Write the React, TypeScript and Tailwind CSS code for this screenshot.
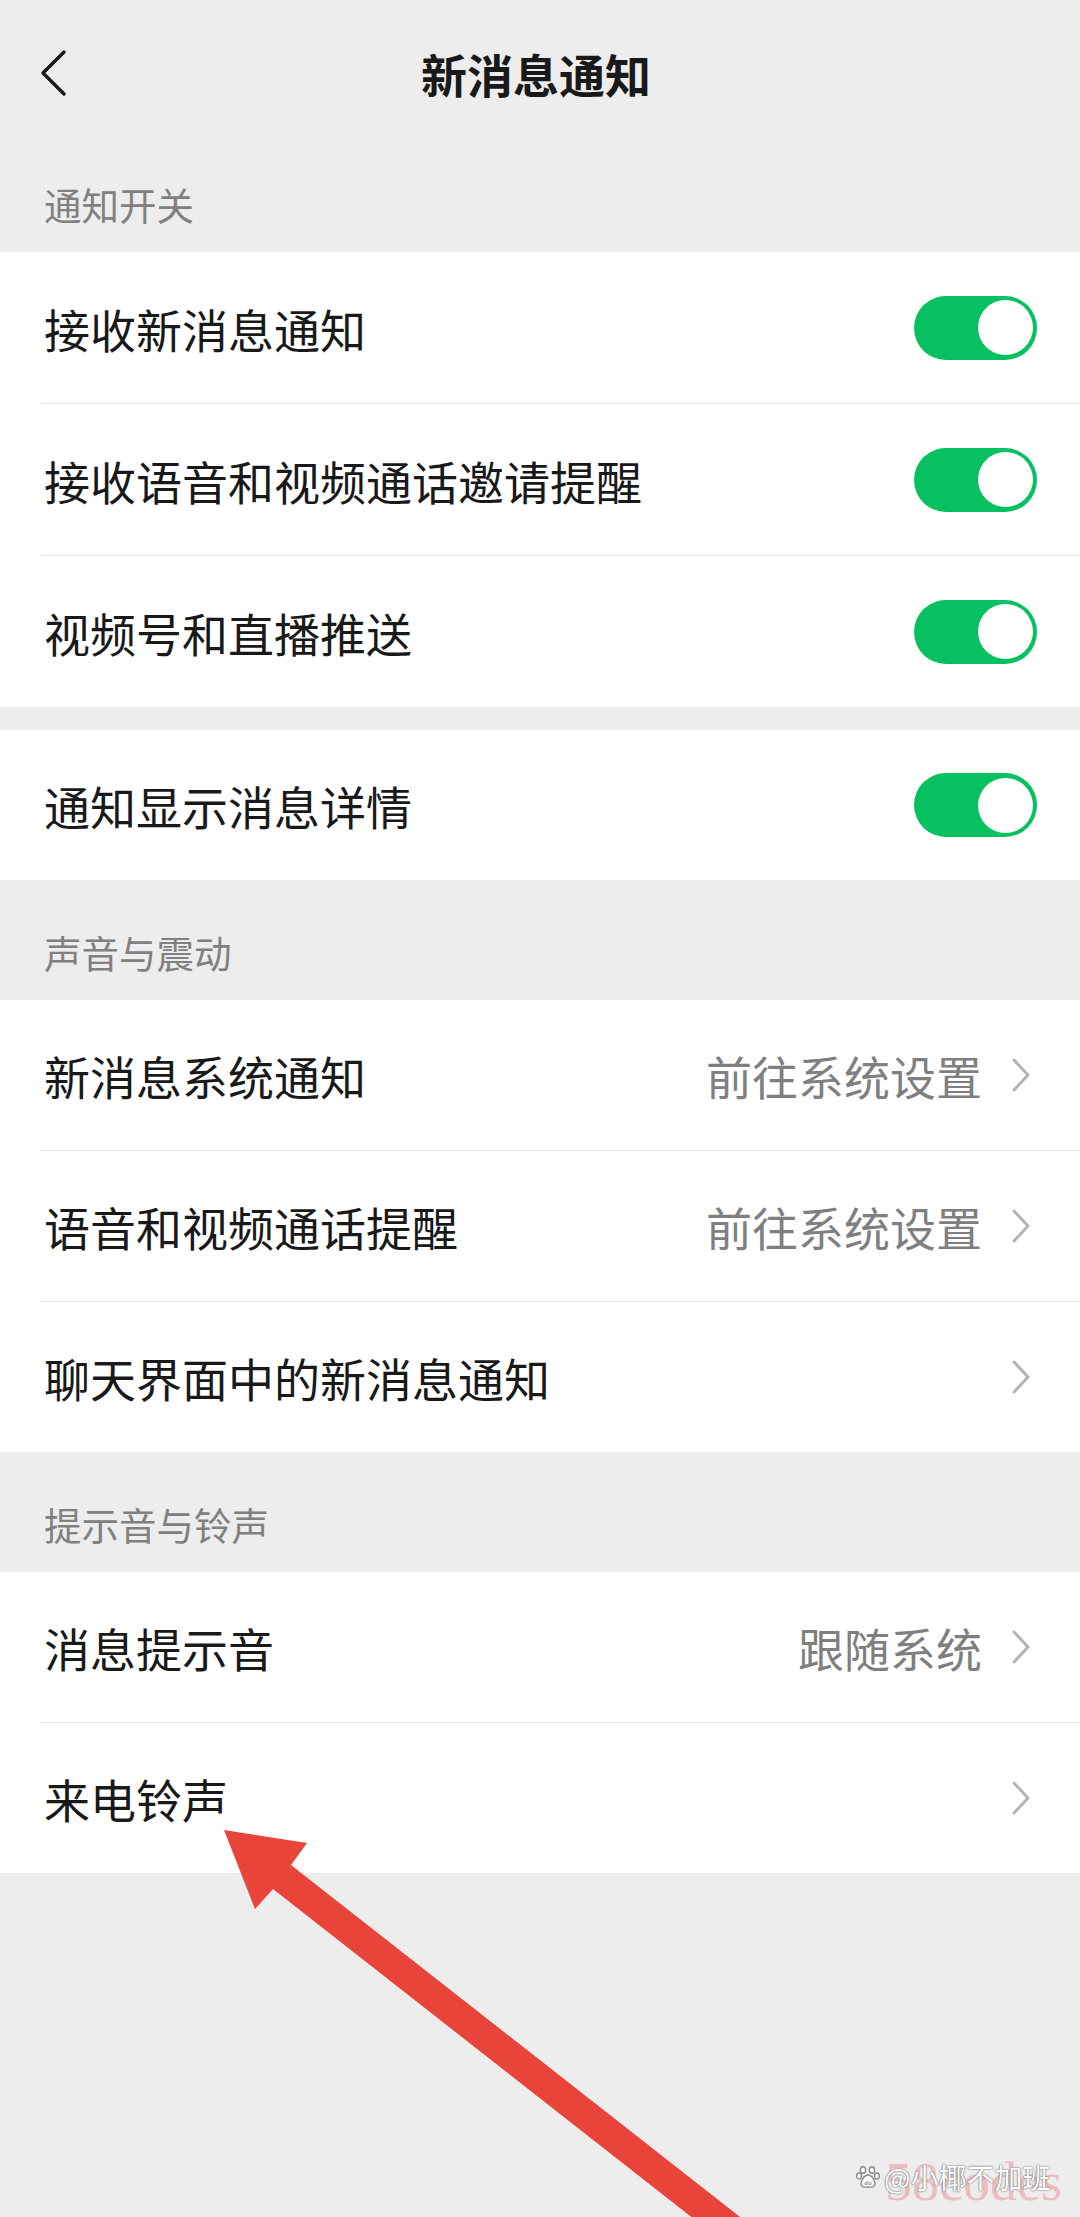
import React from "react";

const FONT = '"Noto Sans CJK SC", "Noto Sans", sans-serif';

function Toggle() {
  return (
    <div className="flex h-[64px] w-[123px] shrink-0 items-center justify-end rounded-full bg-[#07c160] pr-[4px]">
      <div className="h-[55px] w-[55px] rounded-full bg-white" />
    </div>
  );
}

function Chevron() {
  return (
    <svg width="20" height="34" viewBox="0 0 20 34" className="shrink-0">
      <polyline points="3,2 17,17 3,32" fill="none" stroke="#b3b3b3" strokeWidth="3" strokeLinecap="round" strokeLinejoin="round" />
    </svg>
  );
}

type Row = { label: string; toggle?: boolean; value?: string; arrow?: boolean };

function Card({ rows, h }: { rows: Row[]; h: string }) {
  return (
    <div className="bg-white">
      {rows.map((r, i) => (
        <div key={r.label}>
          {i > 0 && <div className="ml-[41px] h-px bg-[#e6e6e6]" />}
          <div className={`flex items-center ${h} pl-[44px] ${r.toggle ? "pr-[43px]" : "pr-[49px]"}`}>
            <div className="flex-1 text-[46px] leading-none text-[#191919]">{r.label}</div>
            {r.toggle && <Toggle />}
            {r.value && <div className="mr-[29px] text-[46px] leading-none text-[#7f7f7f]">{r.value}</div>}
            {r.arrow && <Chevron />}
          </div>
        </div>
      ))}
    </div>
  );
}

function Label({ text }: { text: string }) {
  return (
    <div className="h-[120px] pl-[44px] pt-[52px] text-[37.5px] leading-[40px] text-[#808080]">{text}</div>
  );
}

export default function App() {
  return (
    <div className="relative h-[2217px] w-[1080px] overflow-hidden bg-[#ededed]" style={{ fontFamily: FONT }}>
      <div className="h-[132px] pt-[45px]">
        <div className="relative flex h-[56px] items-center justify-center">
          <svg width="30" height="48" viewBox="0 0 30 48" className="absolute left-[38px] top-[4px]">
            <polyline points="26,3 5,24 26,45" fill="none" stroke="#1a1a1a" strokeWidth="3.5" strokeLinecap="round" strokeLinejoin="round" />
          </svg>
          <div className="pr-[8px] text-[46px] font-semibold leading-none text-[#191919]">新消息通知</div>
        </div>
      </div>

      <Label text="通知开关" />
      <Card
        h="h-[151px]"
        rows={[
          { label: "接收新消息通知", toggle: true },
          { label: "接收语音和视频通话邀请提醒", toggle: true },
          { label: "视频号和直播推送", toggle: true },
        ]}
      />
      <div className="h-[23px]" />
      <Card h="h-[150px]" rows={[{ label: "通知显示消息详情", toggle: true }]} />

      <Label text="声音与震动" />
      <Card
        h="h-[150px]"
        rows={[
          { label: "新消息系统通知", value: "前往系统设置", arrow: true },
          { label: "语音和视频通话提醒", value: "前往系统设置", arrow: true },
          { label: "聊天界面中的新消息通知", arrow: true },
        ]}
      />

      <Label text="提示音与铃声" />
      <Card
        h="h-[150px]"
        rows={[
          { label: "消息提示音", value: "跟随系统", arrow: true },
          { label: "来电铃声", arrow: true },
        ]}
      />

      {/* red annotation arrow */}
      <svg className="pointer-events-none absolute left-0 top-0" width="1080" height="2217" viewBox="0 0 1080 2217">
        <polygon
          points="224,1830 307,1843 291,1865 763,2235 745,2259 273,1889 255,1909"
          fill="#e8443a"
        />
      </svg>

      {/* watermark */}
      <div
        className="absolute left-[885px] top-[2155px] text-[54px] leading-none text-[#ecbcc1]"
        style={{ fontFamily: '"Liberation Serif", serif' }}
      >
        58codes
      </div>
      <div className="absolute left-[856px] top-[2163px] flex items-center gap-[4px]">
        <svg width="24" height="24" viewBox="0 0 24 24">
          <g fill="#ffffff" stroke="#8a8a8a" strokeWidth="1.4">
            <ellipse cx="7" cy="5" rx="2.6" ry="3.2" />
            <ellipse cx="16" cy="5" rx="2.6" ry="3.2" />
            <ellipse cx="3" cy="11" rx="2.4" ry="3" />
            <ellipse cx="21" cy="11" rx="2.4" ry="3" />
            <path d="M12 10 C8 10 5 16 5 19 C5 22 8 22.5 12 22 C16 22.5 19 22 19 19 C19 16 16 10 12 10 Z" />
          </g>
          <text x="12" y="20" textAnchor="middle" fontSize="6" fill="#8a8a8a" fontFamily="Liberation Sans, sans-serif" fontWeight="bold">du</text>
        </svg>
        <div
          className="text-[28px] leading-none text-white [text-shadow:0_0_1px_#555,0_0_2px_#777]"
          style={{ fontFamily: FONT }}
        >
          @小椰不加班
        </div>
      </div>
    </div>
  );
}
